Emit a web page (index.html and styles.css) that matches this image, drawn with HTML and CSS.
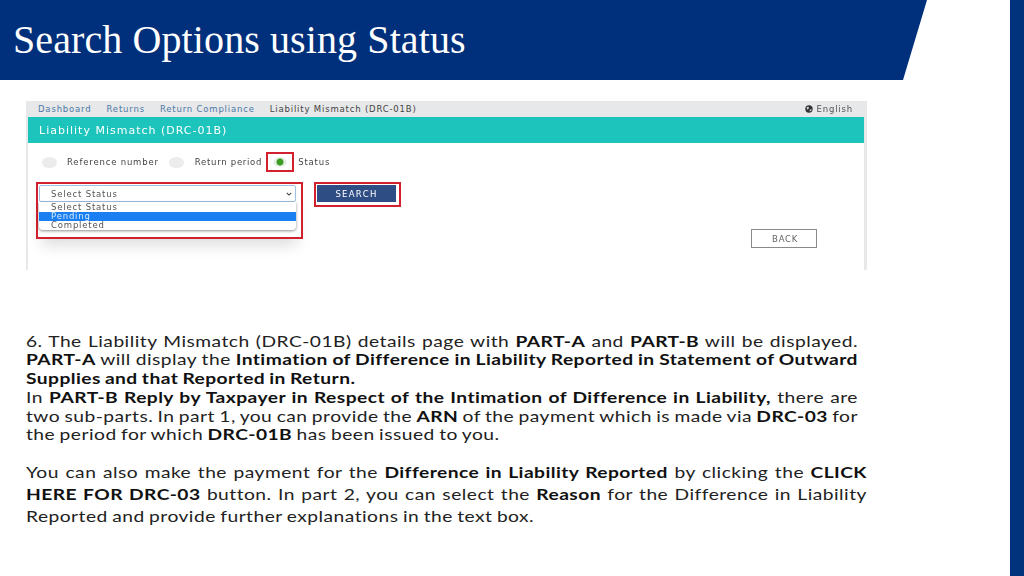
FILE: index.html
```html
<!DOCTYPE html>
<html lang="en">
<head>
<meta charset="utf-8">
<title>Search Options using Status</title>
<link rel="stylesheet" href="styles.css">
</head>
<body>
<div class="slide">
  <main class="main">
    <header class="banner"><h1 class="title">Search Options using Status</h1></header>
    <section class="shot">
      <div class="crumbs">
        <div class="crumb-links">
          <span class="link">Dashboard</span><span class="link">Returns</span><span class="link">Return Compliance</span><span>Liability Mismatch (DRC-01B)</span>
        </div>
        <div class="lang">
          <svg class="globe" viewBox="0 0 10 10" width="8" height="8"><circle cx="5" cy="5" r="4.6" fill="#333"/><path d="M2 3l2-1 1 2-2 2zM6 6l2-1 0 2-2 1z" fill="#ddd"/></svg>
          <span>English</span>
        </div>
      </div>
      <div class="body">
        <div class="teal">Liability Mismatch (DRC-01B)</div>
        <div class="radios">
          <span class="radio"></span><span class="r-label r-ref">Reference number</span>
          <span class="radio"></span><span class="r-label r-period">Return period</span>
          <span class="mark"><span class="radio on"></span></span><span class="r-label">Status</span>
        </div>
        <div class="controls">
          <div class="mark-select">
            <div class="select"><span>Select Status</span>
              <svg class="chev" viewBox="0 0 8 5" width="6" height="4"><path d="M1 1l3 3 3-3" fill="none" stroke="#444" stroke-width="1.4"/></svg>
            </div>
            <ul class="options">
              <li>Select Status</li>
              <li class="active">Pending</li>
              <li>Completed</li>
            </ul>
          </div>
          <div class="mark-search"><button class="search" type="button">SEARCH</button></div>
        </div>
        <div class="back-row"><button class="back" type="button">BACK</button></div>
      </div>
    </section>
    <section class="copy">
      <div class="para para-a">
        <div class="line">6. The Liability Mismatch (DRC-01B) details page with <b>PART-A</b> and <b>PART-B</b> will be displayed.</div>
        <div class="line"><b>PART-A</b> will display the <b>Intimation of Difference in Liability Reported in Statement of Outward</b></div>
        <div class="line end"><b>Supplies and that Reported in Return.</b></div>
        <div class="line">In <b>PART-B Reply by Taxpayer in Respect of the Intimation of Difference in Liability,</b> there are</div>
        <div class="line">two sub-parts. In part 1, you can provide the <b>ARN</b> of the payment which is made via <b>DRC-03</b> for</div>
        <div class="line end">the period for which <b>DRC-01B</b> has been issued to you.</div>
      </div>
      <div class="para para-b">
        <div class="line">You can also make the payment for the <b>Difference in Liability Reported</b> by clicking the <b>CLICK</b></div>
        <div class="line"><b>HERE FOR DRC-03</b> button. In part 2, you can select the <b>Reason</b> for the Difference in Liability</div>
        <div class="line end">Reported and provide further explanations in the text box.</div>
      </div>
    </section>
  </main>
  <div class="stripe"></div>
</div>
</body>
</html>
```
FILE: styles.css
```css
* { box-sizing: border-box; }
html, body { margin: 0; padding: 0; background: #fff; }
.slide { width: 1024px; height: 576px; display: flex; overflow: hidden; background: #fff; }
.main { flex: 1; min-width: 0; }
.stripe { width: 14px; background: #00337c; }

.banner {
  width: 927px; height: 80px; background: #002f7b;
  clip-path: polygon(0 0, 100% 0, 903px 100%, 0 100%);
  display: flex; align-items: center; padding-left: 13px;
}
.title { margin: 0; font: 400 40px/1 "Liberation Serif", serif; letter-spacing: .1px; color: #fff; }

.shot {
  width: 841px; height: 169px; margin: 21px 0 0 26px;
  font-family: "DejaVu Sans", sans-serif; font-size: 8.5px; letter-spacing: .82px; color: #444;
  background: #e6e8e9; padding: 0 3px 0 2px; display: flex; flex-direction: column;
  filter: blur(0.45px);
}
.crumbs { height: 16px; display: flex; align-items: center; justify-content: space-between; padding: 0 14px 0 12px; margin: 0 -3px 0 -2px; }
.crumb-links { display: flex; gap: 15px; }
.link { color: #4d78a8; }
.lang { display: flex; align-items: center; gap: 4px; color: #555; }
.globe { display: block; }
.body { flex: 1; background: #fff; }
.teal { height: 26px; background: #1cc4bc; color: #fff; font-size: 11px; letter-spacing: 1px; display: flex; align-items: center; padding-left: 11px; }

.radios { display: flex; align-items: center; height: 20px; margin-top: 9px; padding-left: 14px; }
.radio { width: 15px; height: 11px; border-radius: 50%; background: #ececec; flex: none; }
.r-label { color: #444; }
.r-ref { margin: 0 10px 0 10px; }
.r-period { margin: 0 4px 0 11px; letter-spacing: .72px; }
.mark { width: 28px; height: 20px; border: 2px solid #d2202e; display: flex; align-items: center; justify-content: center; margin-right: 4px; }
.radio.on { width: 14px; height: 10px; background: radial-gradient(circle, #3c9b22 0 3px, #e8efe6 4px); }

.controls { display: flex; align-items: flex-start; margin-top: 10px; padding-left: 8px; }
.mark-select { width: 267px; height: 57px; border: 2px solid #d2202e; padding: 1px; box-shadow: 0 12px 14px -6px rgba(0,0,0,.14); }
.select { width: 257px; height: 17px; border: 1px solid #9fc3e6; border-radius: 2px; background: #fff; display: flex; align-items: center; justify-content: space-between; padding: 0 3px 0 11px; color: #555; }
.chev { display: block; }
.options { list-style: none; margin: 0; padding: 1px 0 0; width: 257px; height: 28px; background: #fff; border-radius: 0 0 4px 4px; box-shadow: 0 1px 3px rgba(0,0,0,.45); color: #555; }
.options li { height: 9px; line-height: 9px; padding-left: 12px; }
.options .active { background: #1a7ff0; color: #d9e9fb; }
.mark-search { width: 87px; height: 25px; border: 2px solid #d2202e; padding: 1px; margin-left: 11px; }
.search { width: 79px; height: 17px; border: 0; padding: 0; background: #2f4d85; color: #fff; font: 8.5px "DejaVu Sans", sans-serif; letter-spacing: 1.3px; display: block; }

.back-row { display: flex; justify-content: flex-end; padding-right: 47px; margin-top: -10px; }
.back { width: 66px; height: 19px; background: #fff; border: 1px solid #8a8a8a; padding: 0 0 0 2px; color: #666; font: 8.5px "DejaVu Sans", sans-serif; letter-spacing: .7px; }

.copy { margin: 61.5px 0 0 26px; width: 693px; font-family: Lato, sans-serif; font-size: 16px; letter-spacing: .4px; word-spacing: -1.2px; color: #222; transform: scaleX(1.2); transform-origin: left top; }
.copy b { font-weight: 700; color: #111; letter-spacing: .36px; }
.para-a { width: 693.3px; line-height: 18.8px; }
.para-b { width: 700.8px; line-height: 22px; margin-top: 16.5px; }
.line { text-align: justify; text-align-last: justify; white-space: nowrap; }
.line.end { text-align-last: left; word-spacing: -.8px; }
```
